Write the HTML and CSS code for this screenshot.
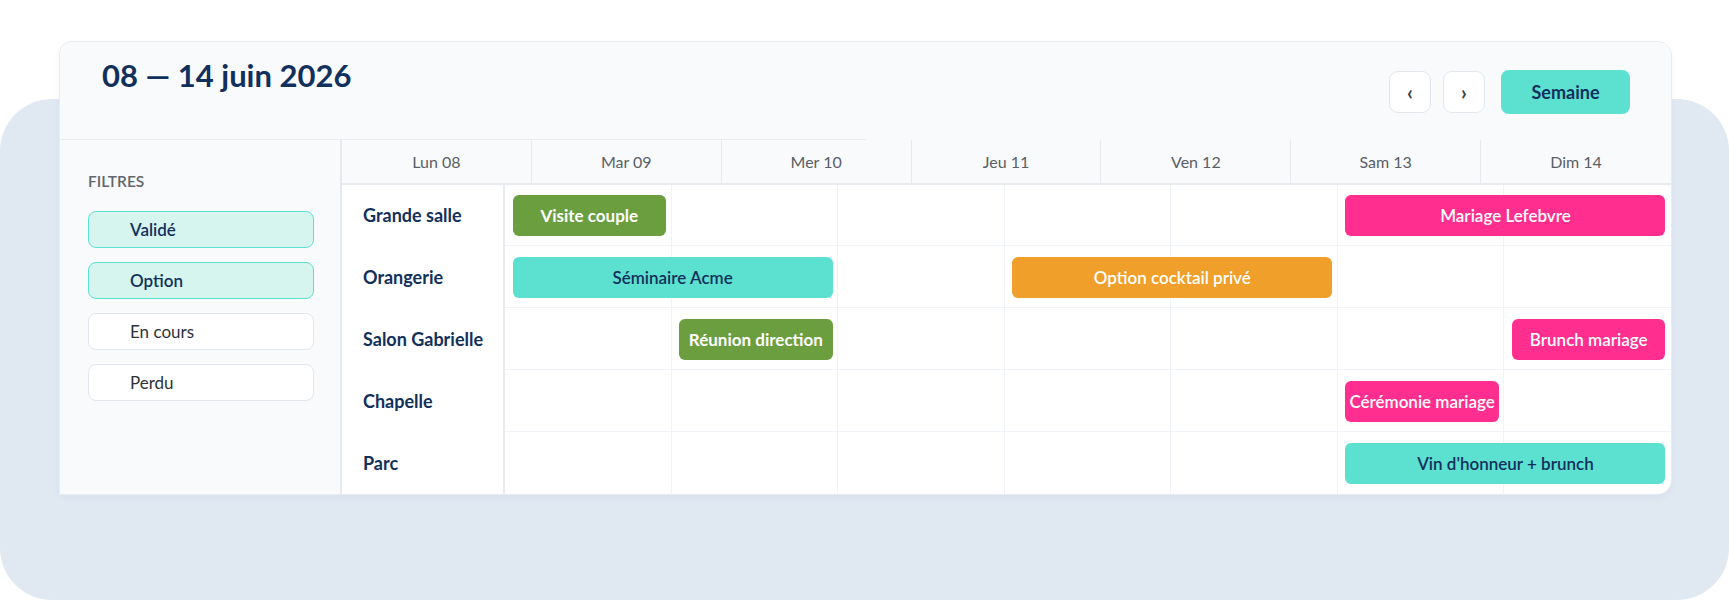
FILE: index.html
```html
<!DOCTYPE html>
<html lang="fr">
<head>
    <meta charset="UTF-8">
    <meta name="viewport" content="width=device-width, initial-scale=1.0">
    <title>Planning des salles</title>
    <link rel="stylesheet" href="styles.css">
</head>
<body>

    <div class="scene">
        <div class="planning">

            <div class="entete">
                <h1 class="periode">08 — 14 juin 2026</h1>
                <div class="actions">
                    <button class="nav">‹</button>
                    <button class="nav">›</button>
                    <button class="vue">Semaine</button>
                </div>
            </div>

            <div class="corps">
                <aside class="filtres">
                    <h2>FILTRES</h2>
                    <button class="filtre actif">Validé</button>
                    <button class="filtre actif">Option</button>
                    <button class="filtre">En cours</button>
                    <button class="filtre">Perdu</button>
                </aside>

                <div class="calendrier">
                    <div class="jours">
                        <div class="jour">Lun 08</div>
                        <div class="jour">Mar 09</div>
                        <div class="jour">Mer 10</div>
                        <div class="jour">Jeu 11</div>
                        <div class="jour">Ven 12</div>
                        <div class="jour">Sam 13</div>
                        <div class="jour">Dim 14</div>
                    </div>

                    <div class="ligne">
                        <div class="salle">Grande salle</div>
                        <div class="case"></div><div class="case"></div><div class="case"></div><div class="case"></div><div class="case"></div><div class="case"></div><div class="case"></div>
                        <div class="evt vert c1">Visite couple</div>
                        <div class="evt rose c6 s2">Mariage Lefebvre</div>
                    </div>

                    <div class="ligne">
                        <div class="salle">Orangerie</div>
                        <div class="case"></div><div class="case"></div><div class="case"></div><div class="case"></div><div class="case"></div><div class="case"></div><div class="case"></div>
                        <div class="evt turquoise c1 s2">Séminaire Acme</div>
                        <div class="evt orange c4 s2">Option cocktail privé</div>
                    </div>

                    <div class="ligne">
                        <div class="salle">Salon Gabrielle</div>
                        <div class="case"></div><div class="case"></div><div class="case"></div><div class="case"></div><div class="case"></div><div class="case"></div><div class="case"></div>
                        <div class="evt vert c2">Réunion direction</div>
                        <div class="evt rose c7">Brunch mariage</div>
                    </div>

                    <div class="ligne">
                        <div class="salle">Chapelle</div>
                        <div class="case"></div><div class="case"></div><div class="case"></div><div class="case"></div><div class="case"></div><div class="case"></div><div class="case"></div>
                        <div class="evt rose c6">Cérémonie mariage</div>
                    </div>

                    <div class="ligne">
                        <div class="salle">Parc</div>
                        <div class="case"></div><div class="case"></div><div class="case"></div><div class="case"></div><div class="case"></div><div class="case"></div><div class="case"></div>
                        <div class="evt turquoise c6 s2">Vin d'honneur + brunch</div>
                    </div>
                </div>
            </div>

        </div>
    </div>

</body>
</html>
```

FILE: styles.css
```css
* {
    padding: 0;
    margin: 0;
    box-sizing: border-box;
}

body {
    width: 1729px;
    height: 600px;
    overflow: hidden;
    font-family: Lato, "Open Sans", sans-serif;
    background-color: white;
    color: #12305c;
}

.scene {
    position: relative;
    height: 600px;
    padding: 42px 58px 0 60px;
}

/* grand fond bleu derrière la carte */
.scene::before {
    content: "";
    position: absolute;
    top: 99px;
    left: 0;
    right: 0;
    bottom: 0;
    background-color: #e0e9f2;
    border-radius: 52px;
}

.planning {
    position: relative;
    width: 1611px;
    height: 452px;
    background-color: white;
    border-radius: 12px 14px 14px 0;
    box-shadow: 0 0 0 1px #e8ecf1, 0 3px 8px rgba(15, 47, 92, 0.05);
    overflow: hidden;
    display: flex;
    flex-direction: column;
}

.entete {
    height: 98px;
    flex-shrink: 0;
    display: flex;
    justify-content: space-between;
    align-items: center;
    padding: 0 41px 0 42px;
    background-color: #f8fafc;
    background-image: linear-gradient(#e8ebef, #e8ebef);
    background-size: 806px 1px;
    background-position: left bottom;
    background-repeat: no-repeat;
}

.periode {
    align-self: flex-start;
    margin-top: 14px;
    font-size: 31px;
    font-weight: 700;
    color: #12305c;
}

.actions {
    display: flex;
    align-items: center;
    gap: 12px;
    margin-top: 2px;
}

button {
    font-family: inherit;
    border: none;
    outline: none;
    cursor: pointer;
}

.nav {
    width: 42px;
    height: 42px;
    border-radius: 9px;
    background-color: white;
    border: 1.5px solid #e3e7ed;
    font-size: 20px;
    font-weight: 700;
    color: #3a3f47;
}

.vue {
    margin-left: 4px;
    width: 129px;
    height: 44px;
    border-radius: 8px;
    background-color: #5ce0cf;
    font-size: 18px;
    font-weight: 700;
    color: #12305c;
}

.corps {
    flex: 1;
    display: grid;
    grid-template-columns: 282px 1fr;
}

.filtres {
    background-color: #f8fafc;
    border-right: 2px solid #e6e9ee;
    padding: 32px 26px 0 28px;
    display: flex;
    flex-direction: column;
}

.filtres h2 {
    font-size: 15.5px;
    font-weight: 600;
    color: #62666d;
    margin-bottom: 21px;
}

.filtre {
    height: 37px;
    margin-bottom: 14px;
    border-radius: 8px;
    background-color: white;
    border: 1.5px solid #e3e7ed;
    text-align: left;
    padding-left: 41px;
    font-size: 17px;
    color: #2e3238;
}

.filtre.actif {
    background-color: #d6f5ef;
    border-color: #5ce0cf;
    font-weight: 600;
    color: #12305c;
}

.calendrier {
    display: flex;
    flex-direction: column;
}

.jours {
    height: 44.5px;
    flex-shrink: 0;
    display: grid;
    grid-template-columns: repeat(7, 1fr);
    background-color: #f8fafc;
    border-bottom: 2px solid #e8ebf0;
}

.jour {
    display: flex;
    align-items: center;
    justify-content: center;
    border-right: 1.5px solid #e6e9ee;
    font-size: 16px;
    color: #5a5f67;
}

.jour:last-child {
    border-right: none;
}

.ligne {
    height: 61.9px;
    flex-shrink: 0;
    display: grid;
    grid-template-columns: 163px repeat(7, 1fr);
    grid-template-rows: 100%;
}

.salle {
    grid-row: 1;
    grid-column: 1;
    display: flex;
    align-items: center;
    padding-left: 21px;
    border-right: 2px solid #e8ebf0;
    font-size: 18px;
    font-weight: 700;
    color: #12305c;
}

.case {
    grid-row: 1;
    border-right: 1px solid #f0f3f7;
    border-bottom: 1px solid #f0f3f7;
}

.case:nth-child(2) { grid-column: 2; }
.case:nth-child(3) { grid-column: 3; }
.case:nth-child(4) { grid-column: 4; }
.case:nth-child(5) { grid-column: 5; }
.case:nth-child(6) { grid-column: 6; }
.case:nth-child(7) { grid-column: 7; }
.case:nth-child(8) { grid-column: 8; border-right: none; }

.ligne:last-child .case {
    border-bottom: none;
}

.evt {
    grid-row: 1;
    margin: 10.5px 5.5px 10px 7.5px;
    border-radius: 6px;
    display: flex;
    align-items: center;
    justify-content: center;
    white-space: nowrap;
    font-size: 17px;
    font-weight: 700;
    color: white;
}

/* colonne de départ (lundi = c1) */
.c1 { grid-column-start: 2; }
.c2 { grid-column-start: 3; }
.c3 { grid-column-start: 4; }
.c4 { grid-column-start: 5; }
.c5 { grid-column-start: 6; }
.c6 { grid-column-start: 7; }
.c7 { grid-column-start: 8; }
.s2 { grid-column-end: span 2; }

.vert {
    background-color: #6a9e3e;
}

.rose {
    background-color: #ff2e8f;
    font-weight: 600;
}

.orange {
    background-color: #f09f2a;
    font-weight: 600;
}

.turquoise {
    background-color: #5ce0cf;
    color: #12305c;
    font-weight: 600;
}
```
